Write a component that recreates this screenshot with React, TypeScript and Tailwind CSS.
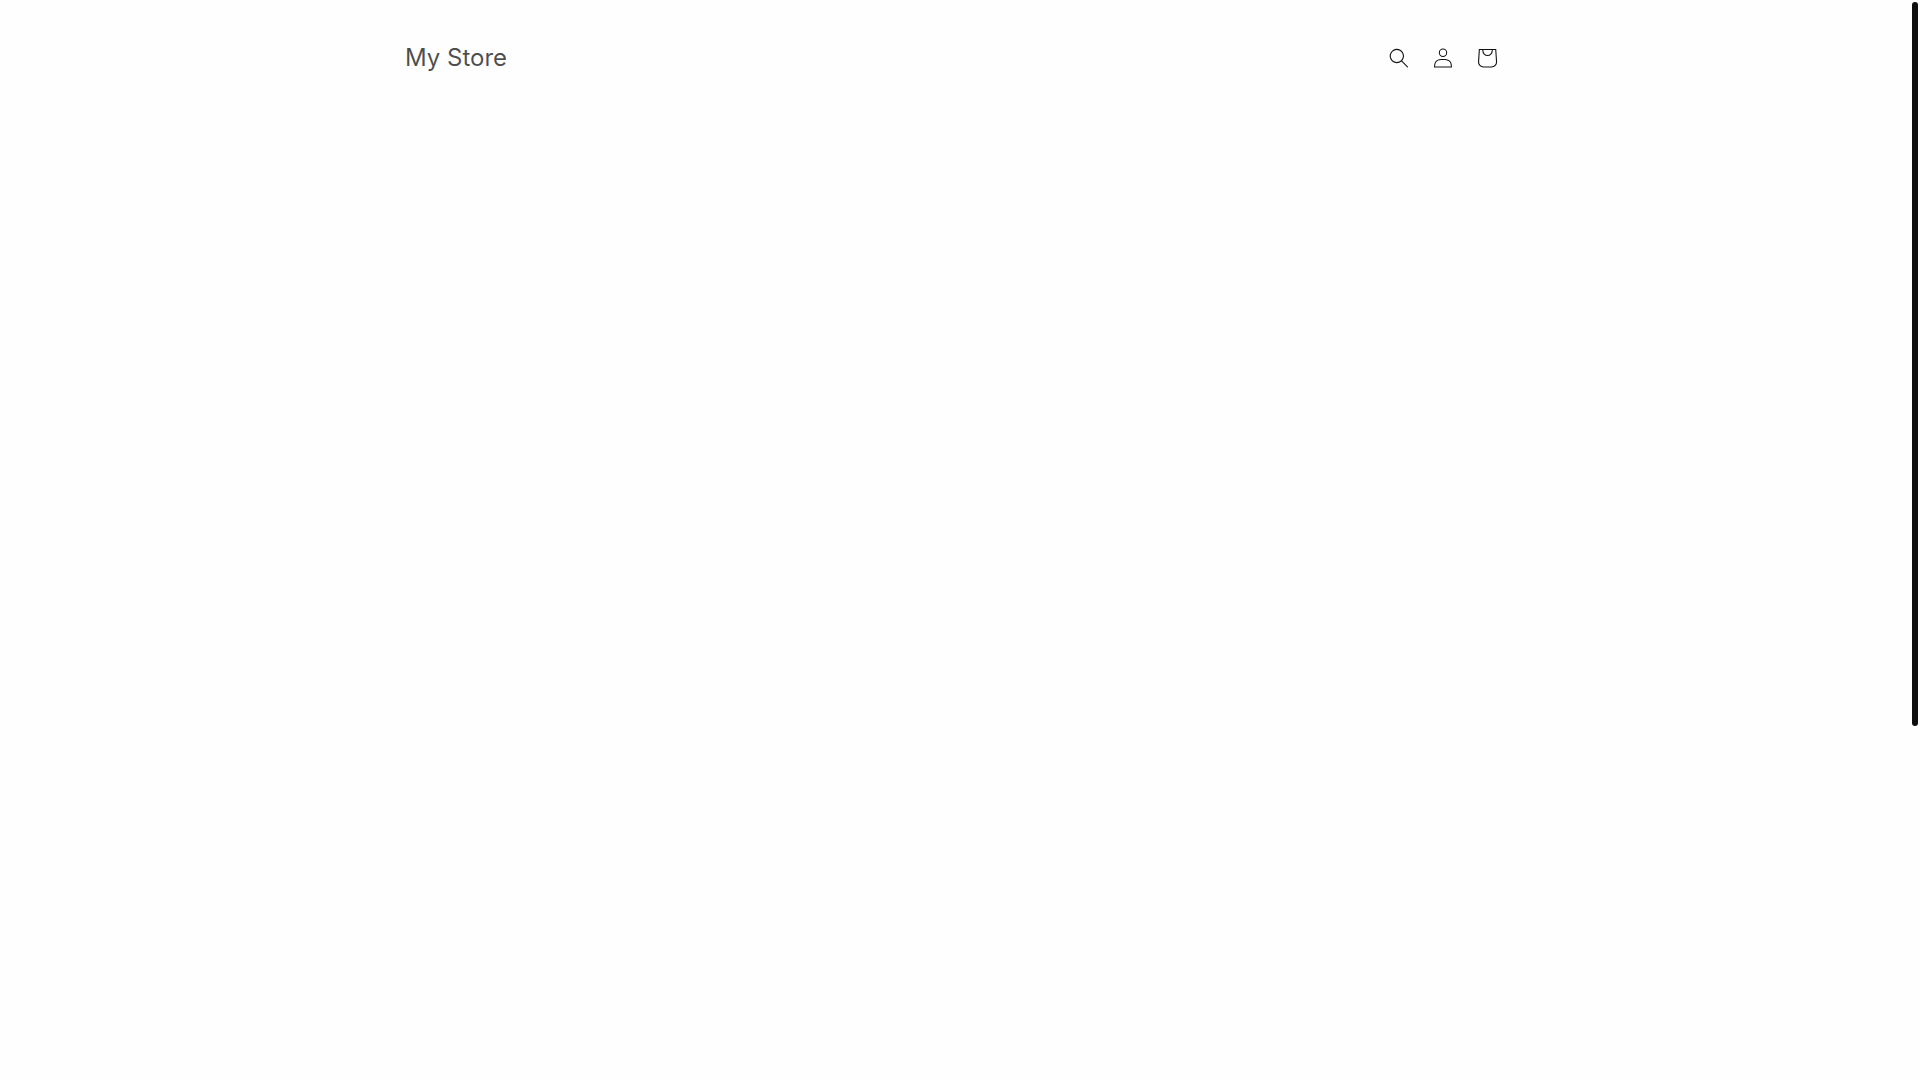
import React from 'react';

const SearchIcon = () => (
  <svg viewBox="0 0 18 19" className="w-5 h-5" fill="none" aria-hidden="true">
    <path
      fillRule="evenodd"
      clipRule="evenodd"
      fill="currentColor"
      d="M11.03 11.68A5.784 5.784 0 112.85 3.5a5.784 5.784 0 018.18 8.18zm.26 1.12a6.78 6.78 0 11.72-.7l5.4 5.4a.5.5 0 11-.71.7l-5.41-5.4z"
    />
  </svg>
);

const AccountIcon = () => (
  <svg viewBox="0 0 18 19" className="w-5 h-5" fill="none" aria-hidden="true">
    <path
      fillRule="evenodd"
      clipRule="evenodd"
      fill="currentColor"
      d="M6 4.5a3 3 0 116 0 3 3 0 01-6 0zm3-4a4 4 0 100 8 4 4 0 000-8zm5.58 12.15c1.12.82 1.83 2.24 1.91 4.85H1.51c.08-2.6.79-4.03 1.9-4.85C4.66 11.75 6.5 11.5 9 11.5s4.35.26 5.58 1.15zM9 10.5c-2.5 0-4.65.24-6.17 1.35C1.27 12.98.5 14.93.5 18v.5h17V18c0-3.07-.77-5.02-2.33-6.15-1.52-1.1-3.67-1.35-6.17-1.35z"
    />
  </svg>
);

const CartIcon = () => (
  <svg viewBox="0 0 40 40" className="w-11 h-11" fill="none" aria-hidden="true">
    <path
      fillRule="evenodd"
      fill="currentColor"
      d="M15.75 11.8h-3.16l-.77 11.6a5 5 0 0 0 4.99 5.34h7.38a5 5 0 0 0 4.99-5.33L28.4 11.8zm0 1h-2.22l-.71 10.67a4 4 0 0 0 3.99 4.27h7.38a4 4 0 0 0 4-4.27l-.72-10.67h-2.22v.63a4.75 4.75 0 1 1-9.5 0zm8.5 0h-7.5v.63a3.75 3.75 0 1 0 7.5 0z"
    />
  </svg>
);

const Header = () => (
  <header className="max-w-[1200px] mx-auto px-[50px] py-9 flex items-center justify-between">
    <a href="#" className="text-2xl leading-8 text-[#121212]/75 hover:text-[#121212]">
      My Store
    </a>
    <div className="flex -mr-1 text-[#121212]">
      <button type="button" aria-label="Search" className="w-11 h-11 flex items-center justify-center cursor-pointer">
        <SearchIcon />
      </button>
      <a href="#account" aria-label="Log in" className="w-11 h-11 flex items-center justify-center">
        <AccountIcon />
      </a>
      <a href="#cart" aria-label="Cart" className="w-11 h-11 flex items-center justify-center">
        <CartIcon />
      </a>
    </div>
  </header>
);

const App = () => {
  return (
    <div className="min-h-screen flex bg-[#fefefe] font-[Inter,sans-serif]">
      <main className="flex-1">
        <Header />
      </main>
      {/* scroll track */}
      <div className="w-2.5 p-0.5" aria-hidden="true">
        <div className="h-[67vh] rounded-full bg-[#0f0f0d]"></div>
      </div>
    </div>
  );
};

export default App;
